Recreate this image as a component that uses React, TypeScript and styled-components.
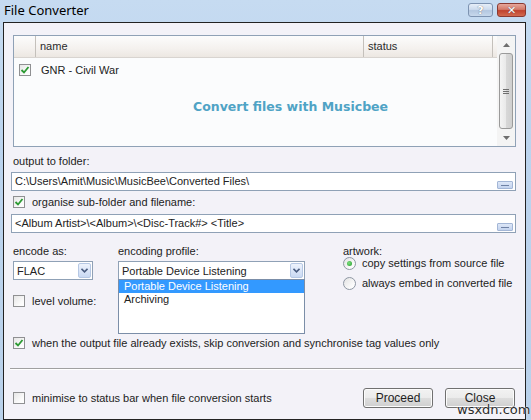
import React from 'react';
import styled, {createGlobalStyle} from 'styled-components';

const GlobalStyle = createGlobalStyle`
  html, body {
    margin: 0;
    padding: 0;
  }
  body {
    width: 531px;
    height: 420px;
    overflow: hidden;
    font-family: "Liberation Sans", Arial, sans-serif;
    font-size: 11px;
    color: #222;
  }
`;

// 창 전체
const Window = styled.div`
  position: relative;
  width: 531px;
  height: 420px;
  box-sizing: border-box;
  padding: 0 5px 0 3px;
  display: flex;
  flex-direction: column;
  background: linear-gradient(180deg, #c6dbf1 0%, #bcd4ee 30%, #b9d1ea 100%);
`;

const TitleBar = styled.div`
  height: 22px;
  flex-shrink: 0;
  display: flex;
  align-items: flex-start;
  padding-left: 1px;

  .title {
    margin-top: 2px;
    font-family: "Noto Sans", "Open Sans", sans-serif;
    font-size: 13px;
    line-height: 16px;
    color: #000;
    flex: 1;
  }
`;

const CaptionButton = styled.div<{$close?: boolean}>`
  margin-top: 3px;
  width: ${(p) => (p.$close ? 29 : 25)}px;
  height: 14px;
  box-sizing: border-box;
  border: 1px solid ${(p) => (p.$close ? '#8a3a32' : '#7d93b1')};
  border-radius: 3px;
  margin-right: ${(p) => (p.$close ? 0 : 4)}px;
  background: ${(p) =>
    p.$close
      ? 'linear-gradient(180deg, #e6a79b 0%, #d37a69 45%, #c0432f 55%, #d26a4f 100%)'
      : 'linear-gradient(180deg, #e6eef8 0%, #cddcee 45%, #b3c7e0 55%, #c7d8ec 100%)'};
  display: flex;
  align-items: center;
  justify-content: center;
  color: #fff;
  font-family: "DejaVu Sans", sans-serif;
  font-weight: bold;
  font-size: 11px;
  line-height: 11px;
  text-shadow: 0 0 1px #445;
`;

const Client = styled.div`
  flex: 1;
  border: 1px solid #222;
  background: #f3f2f8;
  padding: 12px 9px 0 9px;
  display: flex;
  flex-direction: column;
`;

// 파일 리스트
const ListBox = styled.div`
  height: 112px;
  box-sizing: border-box;
  border: 1px solid #8fa1b6;
  background: #fbfcfd;
  display: flex;
`;

const ListMain = styled.div`
  flex: 1;
  display: flex;
  flex-direction: column;
`;

const Header = styled.div`
  height: 21px;
  display: flex;
  background: linear-gradient(180deg, #fcfcfc 0%, #f4f1ee 60%, #ece7e2 100%);
  border-bottom: 1px solid #d8d4d0;
`;

const HeaderCell = styled.div<{$w: number}>`
  width: ${(p) => p.$w}px;
  box-sizing: border-box;
  border-right: 1px solid #c4c0bb;
  padding-left: 4px;
  line-height: 21px;
  color: #2a2a2a;
`;

const Row = styled.div`
  display: flex;
  align-items: center;
  height: 19px;
  margin-top: 2px;
  padding-left: 5px;
  gap: 10px;
`;

const EmptyHint = styled.div`
  margin-top: 20px;
  padding-left: 179px;
  font-family: "DejaVu Sans", Verdana, sans-serif;
  font-weight: bold;
  font-size: 12.5px;
  color: #4fa3c5;
`;

const ScrollBar = styled.div`
  width: 18px;
  display: flex;
  flex-direction: column;
  align-items: center;
  background: #f4f4f4;
`;

const ScrollArrow = styled.div`
  height: 17px;
  display: flex;
  align-items: center;
  justify-content: center;
`;

const Thumb = styled.div`
  width: 14px;
  flex: 1;
  box-sizing: border-box;
  border: 1px solid #9a9a9a;
  border-radius: 3px;
  background: linear-gradient(90deg, #f4f4f4 0%, #e9e9e9 50%, #d8d8d8 51%, #cfcfcf 100%);
  display: flex;
  align-items: center;
  justify-content: center;
`;

const Label = styled.div<{$mt?: number}>`
  margin-top: ${(p) => p.$mt ?? 0}px;
  line-height: 14px;
  white-space: nowrap;
`;

const TextBox = styled.div<{$mt: number}>`
  margin: ${(p) => p.$mt}px 0 0 -2px;
  height: 19px;
  box-sizing: border-box;
  border: 1px solid #8fa1b6;
  background: #fff;
  display: flex;
  align-items: flex-end;
  justify-content: space-between;
  padding: 0 2px 1px 3px;

  span {
    align-self: center;
    white-space: nowrap;
  }
`;

const BrowseButton = styled.div`
  width: 16px;
  height: 8px;
  box-sizing: border-box;
  border: 1px solid #a3b6d6;
  border-radius: 1px;
  background: linear-gradient(180deg, #dde7f7, #c3d3ee);
  display: flex;
  align-items: center;
  justify-content: center;

  &::after {
    content: '';
    width: 8px;
    height: 1px;
    background: #6f82a5;
  }
`;

const CheckRow = styled.div<{$mt: number}>`
  margin-top: ${(p) => p.$mt}px;
  display: flex;
  align-items: center;
  gap: 7px;
  line-height: 14px;
  white-space: nowrap;
`;

const Box = styled.span`
  width: 12px;
  height: 12px;
  flex-shrink: 0;
  box-sizing: border-box;
  border: 1px solid #8f9092;
  background: linear-gradient(135deg, #e6e6e6 0%, #fbfbfb 70%, #ffffff 100%);
  display: flex;
  align-items: center;
  justify-content: center;
`;

const Radio = styled.span<{$on?: boolean}>`
  width: 13px;
  height: 13px;
  flex-shrink: 0;
  box-sizing: border-box;
  border: 1px solid #8e97a3;
  border-radius: 50%;
  background: linear-gradient(135deg, #e3e3e3 0%, #fafafa 70%, #fff 100%);
  display: flex;
  align-items: center;
  justify-content: center;

  &::after {
    content: '';
    display: ${(p) => (p.$on ? 'block' : 'none')};
    width: 5px;
    height: 5px;
    border-radius: 50%;
    background: radial-gradient(circle at 40% 40%, #7fe07f, #1f9a2a);
  }
`;

const EncodeGrid = styled.div`
  margin-top: 11px;
  display: grid;
  grid-template-columns: 105px 225px 1fr;
`;

const Column = styled.div`
  display: flex;
  flex-direction: column;
`;

const Combo = styled.div<{$w: number}>`
  position: relative;
  margin-top: 3px;
  width: ${(p) => p.$w}px;
  height: 19px;
  box-sizing: border-box;
  border: 1px solid #8fa1b6;
  background: #fff;
  display: flex;
  align-items: center;
  justify-content: space-between;
  padding: 0 1px 0 3px;
`;

const ComboArrow = styled.span`
  width: 13px;
  height: 15px;
  box-sizing: border-box;
  border: 1px solid #b6c8e4;
  border-radius: 2px;
  background: linear-gradient(180deg, #eef3fc 0%, #dbe6f8 50%, #c9d9f3 100%);
  display: flex;
  align-items: center;
  justify-content: center;
`;

// 열린 드롭다운 목록 (콤보 위에 겹침)
const DropList = styled.div`
  position: absolute;
  left: -1px;
  top: 17px;
  width: 187px;
  height: 55px;
  box-sizing: border-box;
  border: 1px solid #7b8ea8;
  background: #fff;
  z-index: 2;
`;

const DropItem = styled.div<{$sel?: boolean}>`
  height: 13px;
  line-height: 13px;
  padding-left: 5px;
  background: ${(p) => (p.$sel ? '#3399ff' : 'transparent')};
  color: ${(p) => (p.$sel ? '#fff' : '#222')};
  white-space: nowrap;
`;

const RadioRow = styled.div<{$mt: number}>`
  margin-top: ${(p) => p.$mt}px;
  display: flex;
  align-items: center;
  gap: 6px;
  line-height: 14px;
  white-space: nowrap;
`;

const Separator = styled.div`
  margin: 18px -8px 0 -3px;
  height: 1px;
  background: #a0a0a0;
  border-bottom: 1px solid #fff;
`;

const BottomRow = styled.div`
  margin-top: 18px;
  display: flex;
  align-items: center;
  justify-content: space-between;
  padding-right: 1px;
`;

const Buttons = styled.div`
  display: flex;
  gap: 12px;
`;

const PushButton = styled.button`
  width: 70px;
  height: 20px;
  box-sizing: border-box;
  border: 1px solid #707070;
  border-radius: 3px;
  background: linear-gradient(180deg, #f2f2f2 0%, #ebebeb 50%, #dddddd 51%, #cfcfcf 100%);
  box-shadow: inset 0 0 0 1px #fcfcfc;
  font-family: "Liberation Sans", Arial, sans-serif;
  font-size: 12px;
  color: #1e1e1e;
  padding: 0;
`;

const Watermark = styled.div`
  position: absolute;
  left: 457px;
  top: 402px;
  font-family: "DejaVu Sans", sans-serif;
  font-size: 13px;
  line-height: 15px;
  color: #2a2a2a;
  text-shadow: 0 0 1px #fff, 0 0 1px #fff;
`;

const Check = () => (
  <svg width="10" height="10" viewBox="0 0 10 10">
    <path d="M1.5 5 L4 7.5 L8.5 2" fill="none" stroke="#2c9a33" strokeWidth="1.8" />
  </svg>
);

const CheckBox = ({on}: {on?: boolean}) => <Box>{on && <Check />}</Box>;

const Chevron = () => (
  <svg width="7" height="5" viewBox="0 0 7 5">
    <path d="M0.5 0.8 L3.5 3.8 L6.5 0.8" fill="none" stroke="#4a5d80" strokeWidth="1.6" />
  </svg>
);

const Tri = ({down}: {down?: boolean}) => (
  <svg width="7" height="4" viewBox="0 0 7 4">
    <path d={down ? 'M0 0 L7 0 L3.5 4 Z' : 'M0 4 L7 4 L3.5 0 Z'} fill="#6e6e6e" />
  </svg>
);

export default function App() {
  return (
    <Window>
      <GlobalStyle />
      <TitleBar>
        <span className="title">File Converter</span>
        <CaptionButton>?</CaptionButton>
        <CaptionButton $close>✕</CaptionButton>
      </TitleBar>
      <Client>
        <ListBox>
          <ListMain>
            <Header>
              <HeaderCell $w={22} />
              <HeaderCell $w={328}>name</HeaderCell>
              <HeaderCell $w={129}>status</HeaderCell>
            </Header>
            <Row>
              <CheckBox on />
              <span>GNR - Civil War</span>
            </Row>
            <EmptyHint>Convert files with Musicbee</EmptyHint>
          </ListMain>
          <ScrollBar>
            <ScrollArrow>
              <Tri />
            </ScrollArrow>
            <Thumb>
              <svg width="6" height="5" viewBox="0 0 6 5">
                <path d="M0 0.5 H6 M0 2.5 H6 M0 4.5 H6" stroke="#6f6f6f" strokeWidth="1" />
              </svg>
            </Thumb>
            <ScrollArrow>
              <Tri down />
            </ScrollArrow>
          </ScrollBar>
        </ListBox>

        <Label $mt={7}>output to folder:</Label>
        <TextBox $mt={4}>
          <span>C:\Users\Amit\Music\MusicBee\Converted Files\</span>
          <BrowseButton />
        </TextBox>
        <CheckRow $mt={4}>
          <CheckBox on />
          <span>organise sub-folder and filename:</span>
        </CheckRow>
        <TextBox $mt={5}>
          <span>&lt;Album Artist&gt;\&lt;Album&gt;\&lt;Disc-Track#&gt; &lt;Title&gt;</span>
          <BrowseButton />
        </TextBox>

        <EncodeGrid>
          <Column>
            <Label>encode as:</Label>
            <Combo $w={80}>
              <span>FLAC</span>
              <ComboArrow>
                <Chevron />
              </ComboArrow>
            </Combo>
            <CheckRow $mt={14}>
              <CheckBox />
              <span>level volume:</span>
            </CheckRow>
          </Column>
          <Column>
            <Label>encoding profile:</Label>
            <Combo $w={187}>
              <span>Portable Device Listening</span>
              <ComboArrow>
                <Chevron />
              </ComboArrow>
              <DropList>
                <DropItem $sel>Portable Device Listening</DropItem>
                <DropItem>Archiving</DropItem>
              </DropList>
            </Combo>
          </Column>
          <Column>
            <Label>artwork:</Label>
            <RadioRow $mt={-2}>
              <Radio $on />
              <span>copy settings from source file</span>
            </RadioRow>
            <RadioRow $mt={6}>
              <Radio />
              <span>always embed in converted file</span>
            </RadioRow>
          </Column>
        </EncodeGrid>

        <CheckRow $mt={28}>
          <CheckBox on />
          <span>when the output file already exists, skip conversion and synchronise tag values only</span>
        </CheckRow>
        <Separator />
        <BottomRow>
          <CheckRow $mt={0}>
            <CheckBox />
            <span>minimise to status bar when file conversion starts</span>
          </CheckRow>
          <Buttons>
            <PushButton>Proceed</PushButton>
            <PushButton>Close</PushButton>
          </Buttons>
        </BottomRow>
      </Client>
      <Watermark>wsxdn.com</Watermark>
    </Window>
  );
}
